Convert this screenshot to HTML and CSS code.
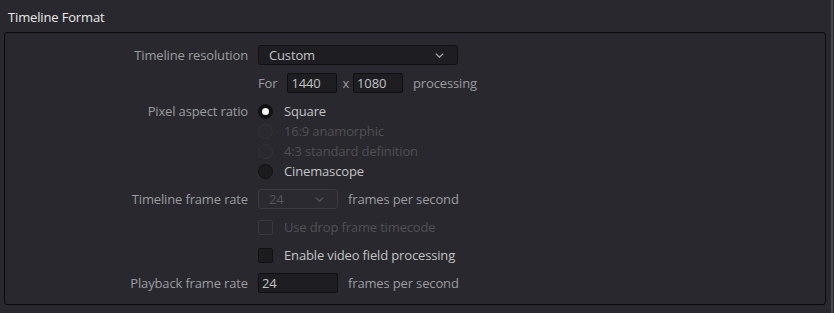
FILE: index.html
```html
<!DOCTYPE html>
<html>
<head>
<meta charset="utf-8">
<link rel="stylesheet" href="styles.css">
</head>
<body>
<div class="page">
  <div class="content">
    <div class="title">Timeline Format</div>
    <div class="panel">
      <div class="form">
        <div class="label">Timeline resolution</div>
        <div class="ctrl">
          <div class="select wide"><span>Custom</span>
            <svg class="chev" width="9" height="5" viewBox="0 0 9 5"><path d="M0.8 0.6 L4.5 4.2 L8.2 0.6" fill="none" stroke="#a8a8ac" stroke-width="1.3"/></svg>
          </div>
        </div>

        <div class="label"></div>
        <div class="ctrl">
          <span class="text">For</span>
          <div class="input num">1440</div>
          <span class="text x">x</span>
          <div class="input num2">1080</div>
          <span class="text after">processing</span>
        </div>

        <div class="label top">Pixel aspect ratio</div>
        <div class="radios">
          <div class="opt"><span class="radio on"></span><span class="text">Square</span></div>
          <div class="opt dis"><span class="radio"></span><span class="text">16:9 anamorphic</span></div>
          <div class="opt dis"><span class="radio"></span><span class="text">4:3 standard definition</span></div>
          <div class="opt"><span class="radio"></span><span class="text">Cinemascope</span></div>
        </div>

        <div class="label">Timeline frame rate</div>
        <div class="ctrl">
          <div class="select small dis"><span>24</span>
            <svg class="chev" width="9" height="5" viewBox="0 0 9 5"><path d="M0.8 0.6 L4.5 4.2 L8.2 0.6" fill="none" stroke="#56565b" stroke-width="1.3"/></svg>
          </div>
          <span class="text after2">frames per second</span>
        </div>

        <div class="label"></div>
        <div class="ctrl opt dis"><span class="check"></span><span class="text">Use drop frame timecode</span></div>

        <div class="label"></div>
        <div class="ctrl opt"><span class="check"></span><span class="text">Enable video field processing</span></div>

        <div class="label">Playback frame rate</div>
        <div class="ctrl">
          <div class="input pb">24</div>
          <span class="text after2">frames per second</span>
        </div>
      </div>
    </div>
  </div>
  <div class="scroll"></div>
</div>
</body>
</html>
```

FILE: styles.css
```css
* { box-sizing: border-box; }
html, body {
  margin: 0;
  padding: 0;
  background: #28282e;
}
body {
  font-family: "Open Sans", "Noto Sans", sans-serif;
  font-size: 13px;
  letter-spacing: -0.15px;
  color: #9c9ca0;
  width: 834px;
  height: 313px;
  overflow: hidden;
}
.page {
  display: flex;
  height: 313px;
}
.content {
  width: 831px;
}
.scroll {
  width: 2px;
  height: 313px;
  background: #48484d;
}
.title {
  height: 32px;
  padding-left: 8px;
  padding-top: 7px;
  line-height: 20px;
  color: #e8e8ea;
}
.panel {
  margin-left: 4px;
  width: 822px;
  height: 273px;
  border: 1px solid #0b0b0d;
  border-radius: 3px;
  padding-top: 12px;
}
.form {
  display: grid;
  grid-template-columns: 243px auto;
  column-gap: 10px;
  row-gap: 8px;
  grid-auto-rows: minmax(20px, auto);
}
.label {
  text-align: right;
  line-height: 20px;
  height: 20px;
}
.label.top { align-self: start; }
.ctrl {
  display: flex;
  align-items: center;
  height: 20px;
}
.text {
  line-height: 20px;
  white-space: nowrap;
}
.select {
  display: flex;
  align-items: center;
  justify-content: space-between;
  height: 20px;
  background: #1e1e22;
  border: 1px solid #121214;
  border-radius: 3px;
  color: #c2c2c4;
}
.select.wide {
  width: 200px;
  padding: 0 13px 0 10px;
}
.select.small {
  width: 80px;
  padding: 0 13px 0 10px;
}
.select.dis {
  background: #2a2a30;
  border-color: #3a3a40;
  color: #56565b;
}
.chev { display: block; }
.input {
  height: 20px;
  width: 50px;
  background: #1e1e22;
  border: 1px solid #101012;
  border-radius: 2px;
  color: #c2c2c4;
  padding-left: 3px;
  line-height: 18px;
}
.input.num { margin-left: 10px; }
.text.x { margin: 0 4px 0 5px; }
.text.after { margin-left: 10px; }
.text.after2 { margin-left: 10px; }
.input.pb { width: 80px; }
.radios {
  display: flex;
  flex-direction: column;
}
.opt {
  display: flex;
  align-items: center;
  height: 20px;
  color: #c2c2c4;
}
.opt .text { margin-left: 11px; }
.opt.dis { color: #505055; }
.radio {
  width: 15px;
  height: 15px;
  border-radius: 50%;
  background: #1c1c1f;
  border: 1px solid #111113;
  display: flex;
  align-items: center;
  justify-content: center;
}
.opt.dis .radio {
  background: #29292f;
  border-color: #333339;
}
.radio.on::after {
  content: "";
  width: 7px;
  height: 7px;
  border-radius: 50%;
  background: #f4f4f4;
}
.radio.on {
  background: #111113;
}
.check {
  width: 15px;
  height: 15px;
  border-radius: 2px;
  background: #1c1c1f;
  border: 1px solid #111113;
}
.opt.dis .check {
  background: #28282e;
  border-color: #38383d;
}
```
